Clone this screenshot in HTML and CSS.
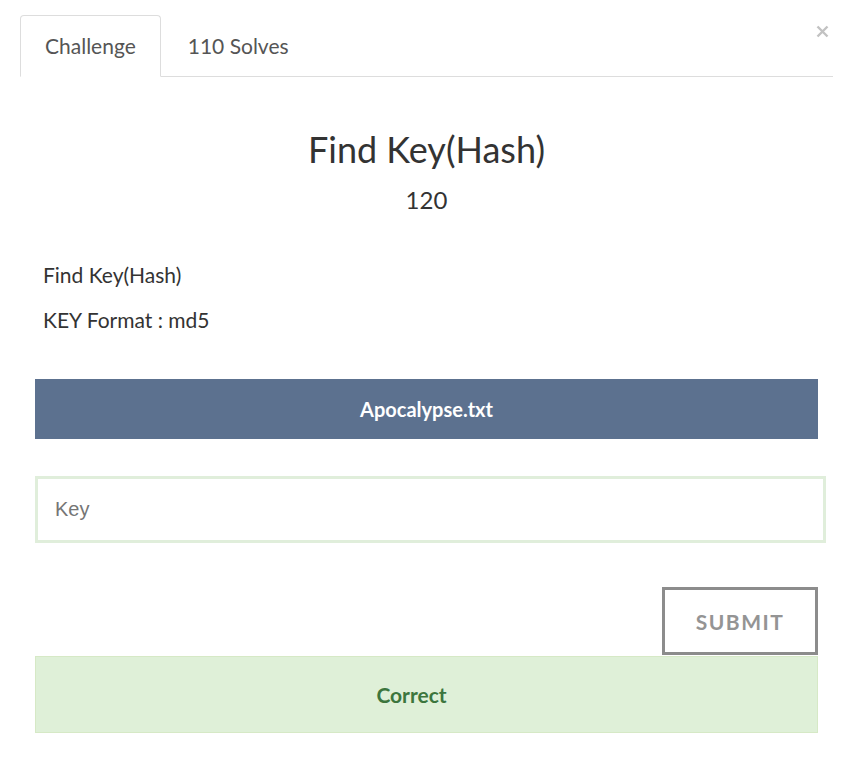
FILE: index.html
```html
<!DOCTYPE html>
<html>
<head>
<meta charset="utf-8">
<link rel="stylesheet" href="styles.css">
</head>
<body>
<div class="modal">
  <button class="close" aria-label="Close">
    <svg width="13" height="13" viewBox="0 0 13 13"><path d="M1.5 1.5 L11.5 11.5 M11.5 1.5 L1.5 11.5" stroke="#c2c2c2" stroke-width="2.4" fill="none"/></svg>
  </button>
  <ul class="tabs">
    <li class="tab active">Challenge</li>
    <li class="tab">110 Solves</li>
  </ul>
  <div class="body">
    <h2 class="title">Find Key(Hash)</h2>
    <h3 class="points">120</h3>
    <div class="desc">
      <p>Find Key(Hash)</p>
      <p>KEY Format : md5</p>
    </div>
    <a class="file">Apocalypse.txt</a>
    <input class="key" type="text" placeholder="Key">
    <div class="actions">
      <button class="submit">SUBMIT</button>
    </div>
    <div class="alert">Correct</div>
  </div>
</div>
</body>
</html>
```
FILE: styles.css
```css
* { box-sizing: border-box; }
html, body { margin: 0; padding: 0; background: #fff; }
body { font-family: Lato, "Open Sans", sans-serif; color: #333; }
.modal { position: relative; margin-left: 20px; width: 813px; padding-top: 15px; }
.close { position: absolute; top: 25px; right: 4px; border: 0; background: none; padding: 0; width: 13px; height: 13px; display: block; }
.close svg { display: block; }
.tabs { list-style: none; margin: 0; padding: 0; display: flex; border-bottom: 1px solid #ddd; height: 62px; }
.tab { font-size: 21px; line-height: 22px; padding: 19px 24px 20px; color: #555; margin-right: 2px; border: 1px solid transparent; border-radius: 4px 4px 0 0; height: 62px; }
.tab.active { border-color: #ddd; border-bottom-color: #fff; background: #fff; }
.body { padding: 0 15px; display: flex; flex-direction: column; }
.title { margin: 52px 0 0; font-size: 36px; line-height: 40px; font-weight: 400; text-align: center; color: #333; }
.points { margin: 16px 0 0; font-size: 24px; line-height: 30px; font-weight: 400; text-align: center; color: #333; }
.desc { margin-top: 46px; padding-left: 8px; }
.desc p { margin: 0 0 18px; font-size: 21px; line-height: 27px; color: #333; }
.desc p:last-child { margin-bottom: 0; }
.file { margin-top: 46px; height: 60px; background: #5c718f; color: #fff; font-weight: 700; font-size: 20px; letter-spacing: 0; display: flex; align-items: center; justify-content: center; }
.key { margin-top: 37px; width: 791px; height: 67px; border: 3px solid #e0eedb; padding: 0 17px; font-family: "Liberation Sans", Arial, sans-serif; font-size: 20px; color: #555; outline: none; }
.key::placeholder { color: #757575; }
.actions { display: flex; justify-content: flex-end; margin-top: 44px; }
.submit { width: 156px; height: 68px; border: 3px solid #8c8c8c; background: #fff; color: #949494; font-family: Lato, sans-serif; font-weight: 700; font-size: 21px; letter-spacing: 1.5px; padding: 0; }
.alert { margin-top: 1px; height: 77px; background: #dff0d8; border: 1px solid #d6e9c6; color: #3c763d; font-size: 21px; font-weight: 700; padding-right: 30px; display: flex; align-items: center; justify-content: center; }
```
